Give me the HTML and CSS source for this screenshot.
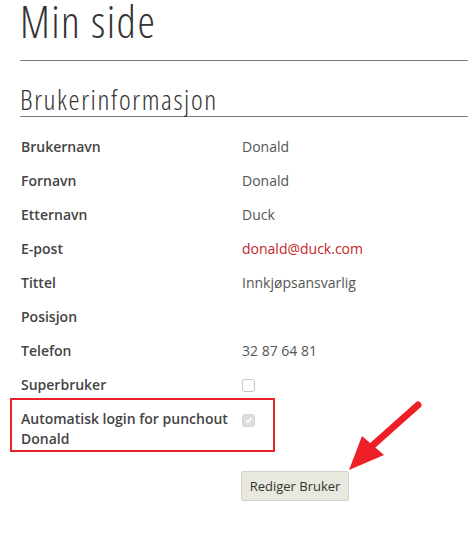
FILE: index.html
```html
<!DOCTYPE html>
<html lang="no">
<head>
    <meta charset="UTF-8">
    <meta name="viewport" content="width=device-width, initial-scale=1.0">
    <title>Min side</title>
    <link rel="stylesheet" href="styles.css">
</head>
<body>
    <div class="side">
        <h1 class="tittel">Min side</h1>
        <h2 class="seksjon">Brukerinformasjon</h2>
        <div class="info">
            <div class="rad"><div class="etikett">Brukernavn</div><div class="verdi">Donald</div></div>
            <div class="rad"><div class="etikett">Fornavn</div><div class="verdi">Donald</div></div>
            <div class="rad"><div class="etikett">Etternavn</div><div class="verdi">Duck</div></div>
            <div class="rad"><div class="etikett">E-post</div><div class="verdi"><a class="epost" href="#">donald@duck.com</a></div></div>
            <div class="rad"><div class="etikett">Tittel</div><div class="verdi">Innkjøpsansvarlig</div></div>
            <div class="rad"><div class="etikett">Posisjon</div><div class="verdi"></div></div>
            <div class="rad"><div class="etikett">Telefon</div><div class="verdi">32 87 64 81</div></div>
            <div class="rad"><div class="etikett">Superbruker</div><div class="verdi"><span class="boks"></span></div></div>
            <div class="rad markert">
                <div class="etikett">Automatisk login for punchout Donald</div>
                <div class="verdi"><span class="boks avkrysset">&#10004;</span></div>
                <!-- rød ramme fra skjermbildet -->
                <div class="ramme"></div>
            </div>
        </div>
        <div class="knapper">
            <button class="rediger">Rediger Bruker</button>
        </div>
    </div>
    <svg class="pil" width="468" height="543" viewBox="0 0 468 543">
        <line x1="418" y1="405" x2="372" y2="446" stroke="#ee1f26" stroke-width="7" stroke-linecap="round"/>
        <polygon points="349,470 362,436 384,455" fill="#ee1f26"/>
    </svg>
</body>
</html>
```
FILE: styles.css
```css
body {
    margin: 0;
    padding: 0;
    background-color: white;
    font-family: "Open Sans", sans-serif;
    color: #333;
}
.side {
    padding-left: 20px;
    position: relative;
}
.tittel {
    font-family: "Open Sans", sans-serif;
    font-weight: 300;
    font-stretch: 75%;
    font-size: 44px;
    line-height: 46px;
    letter-spacing: 1.5px;
    color: #333;
    margin: -2px 0 0 0;
    padding-bottom: 16px;
    border-bottom: 1px solid #7a7a7a;
}
.seksjon {
    font-family: "Open Sans", sans-serif;
    font-weight: 300;
    font-stretch: 75%;
    font-size: 28px;
    line-height: 34px;
    letter-spacing: 1.6px;
    color: #333;
    margin: 21px 0 0 0;
    padding-bottom: 0;
    border-bottom: 1px solid #7a7a7a;
}
.info {
    margin-top: 13px;
    padding-left: 1px;
}
.rad {
    display: grid;
    grid-template-columns: 221px 1fr;
    font-size: 14px;
    line-height: 20px;
    padding: 7px 0;
    position: relative;
}
.etikett {
    font-weight: 600;
    color: #444;
    padding-right: 12px;
}
.verdi {
    color: #555;
}
.epost {
    color: #c4252b;
    text-decoration: none;
}
.boks {
    display: inline-block;
    width: 11px;
    height: 11px;
    border: 1px solid #c4c4c4;
    border-radius: 3px;
    background: white;
    vertical-align: middle;
    margin-top: -2px;
    font-size: 10px;
    line-height: 11px;
    text-align: center;
    color: white;
}
.avkrysset {
    background: #dcdcdc;
    border-color: #d4d4d4;
}
.markert .verdi {
    padding-top: 1px;
}
.ramme {
    position: absolute;
    left: -11px;
    top: -4px;
    width: 265px;
    height: 54px;
    box-sizing: border-box;
    border: 2px solid #e8212a;
    pointer-events: none;
}
.knapper {
    padding-left: 221px;
    margin-top: 15px;
}
.rediger {
    font-family: "Open Sans", sans-serif;
    font-size: 13px;
    color: #333;
    background: #e9e8df;
    border: 1px solid #d2d2ca;
    border-radius: 2px;
    width: 108px;
    height: 30px;
    padding: 0;
    cursor: pointer;
}
.pil {
    position: absolute;
    top: 0;
    left: 0;
    pointer-events: none;
}
```
